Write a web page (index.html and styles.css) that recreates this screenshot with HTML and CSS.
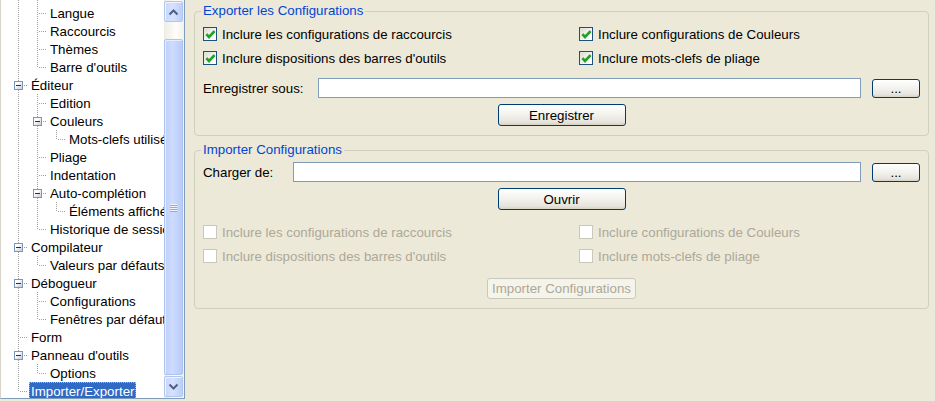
FILE: index.html
```html
<!DOCTYPE html>
<html lang="fr">
<head>
<meta charset="utf-8">
<title>Importer/Exporter</title>
<link rel="stylesheet" href="styles.css">
</head>
<body>
<div class="app">
  <div class="tree">
    <div class="tree-list">
      <div class="row partial"><span class="g v"></span><span class="g v"></span></div>
      <div class="row"><span class="g v"></span><span class="g t"></span><span class="label">Langue</span></div>
      <div class="row"><span class="g v"></span><span class="g t"></span><span class="label">Raccourcis</span></div>
      <div class="row"><span class="g v"></span><span class="g t"></span><span class="label">Thèmes</span></div>
      <div class="row"><span class="g v"></span><span class="g l"></span><span class="label">Barre d'outils</span></div>
      <div class="row"><span class="g t"><span class="exp"></span></span><span class="label">Éditeur</span></div>
      <div class="row"><span class="g v"></span><span class="g t"></span><span class="label">Edition</span></div>
      <div class="row"><span class="g v"></span><span class="g t"><span class="exp"></span></span><span class="label">Couleurs</span></div>
      <div class="row"><span class="g v"></span><span class="g v"></span><span class="g l"></span><span class="label">Mots-clefs utilisés</span></div>
      <div class="row"><span class="g v"></span><span class="g t"></span><span class="label">Pliage</span></div>
      <div class="row"><span class="g v"></span><span class="g t"></span><span class="label">Indentation</span></div>
      <div class="row"><span class="g v"></span><span class="g t"><span class="exp"></span></span><span class="label">Auto-complétion</span></div>
      <div class="row"><span class="g v"></span><span class="g v"></span><span class="g l"></span><span class="label">Éléments affichés</span></div>
      <div class="row"><span class="g v"></span><span class="g l"></span><span class="label">Historique de session</span></div>
      <div class="row"><span class="g t"><span class="exp"></span></span><span class="label">Compilateur</span></div>
      <div class="row"><span class="g v"></span><span class="g l"></span><span class="label">Valeurs par défauts</span></div>
      <div class="row"><span class="g t"><span class="exp"></span></span><span class="label">Débogueur</span></div>
      <div class="row"><span class="g v"></span><span class="g t"></span><span class="label">Configurations</span></div>
      <div class="row"><span class="g v"></span><span class="g l"></span><span class="label">Fenêtres par défaut</span></div>
      <div class="row"><span class="g t"></span><span class="label">Form</span></div>
      <div class="row"><span class="g t"><span class="exp"></span></span><span class="label">Panneau d'outils</span></div>
      <div class="row"><span class="g v"></span><span class="g l"></span><span class="label">Options</span></div>
      <div class="row"><span class="g l"></span><span class="label sel">Importer/Exporter</span></div>
    </div>
    <div class="scrollbar">
      <div class="sb-btn"><svg width="11" height="8" viewBox="0 0 11 8"><polyline points="1.5,6.5 5.5,2.5 9.5,6.5" fill="none" stroke="#4d6185" stroke-width="2"/></svg></div>
      <div class="sb-track">
        <div class="sb-thumb">
          <div class="grip"><span></span><span></span><span></span><span></span></div>
        </div>
      </div>
      <div class="sb-btn"><svg width="11" height="8" viewBox="0 0 11 8"><polyline points="1.5,1.5 5.5,5.5 9.5,1.5" fill="none" stroke="#4d6185" stroke-width="2"/></svg></div>
    </div>
  </div>

  <div class="pane">
    <fieldset class="group export">
      <legend>Exporter les Configurations</legend>
      <div class="checks">
        <label class="check"><span class="box"><svg width="11" height="11" viewBox="0 0 11 11"><polyline points="1.4,5.2 4,8 9.6,2.2" fill="none" stroke="#21a121" stroke-width="2.6"/></svg></span>Inclure les configurations de raccourcis</label>
        <label class="check"><span class="box"><svg width="11" height="11" viewBox="0 0 11 11"><polyline points="1.4,5.2 4,8 9.6,2.2" fill="none" stroke="#21a121" stroke-width="2.6"/></svg></span>Inclure configurations de Couleurs</label>
        <label class="check"><span class="box"><svg width="11" height="11" viewBox="0 0 11 11"><polyline points="1.4,5.2 4,8 9.6,2.2" fill="none" stroke="#21a121" stroke-width="2.6"/></svg></span>Inclure dispositions des barres d'outils</label>
        <label class="check"><span class="box"><svg width="11" height="11" viewBox="0 0 11 11"><polyline points="1.4,5.2 4,8 9.6,2.2" fill="none" stroke="#21a121" stroke-width="2.6"/></svg></span>Inclure mots-clefs de pliage</label>
      </div>
      <div class="file-row first">
        <span class="file-label save">Enregistrer sous:</span>
        <span class="text"></span>
        <span class="btn browse">...</span>
      </div>
      <div class="btn-row">
        <span class="btn main">Enregistrer</span>
      </div>
    </fieldset>

    <fieldset class="group import">
      <legend>Importer Configurations</legend>
      <div class="file-row">
        <span class="file-label load">Charger de:</span>
        <span class="text"></span>
        <span class="btn browse">...</span>
      </div>
      <div class="btn-row">
        <span class="btn main">Ouvrir</span>
      </div>
      <div class="checks disabled">
        <label class="check"><span class="box"></span>Inclure les configurations de raccourcis</label>
        <label class="check"><span class="box"></span>Inclure configurations de Couleurs</label>
        <label class="check"><span class="box"></span>Inclure dispositions des barres d'outils</label>
        <label class="check"><span class="box"></span>Inclure mots-clefs de pliage</label>
      </div>
      <div class="btn-row last">
        <span class="btn off">Importer Configurations</span>
      </div>
    </fieldset>
  </div>
</div>
</body>
</html>
```

FILE: styles.css
```css
html, body {
  margin: 0;
  padding: 0;
}

body {
  background: #ece9d8;
  font-family: "Liberation Sans", Arial, sans-serif;
  font-size: 13.3px;
  color: #000;
  overflow: hidden;
}

.app {
  display: flex;
  height: 401px;
}

/* ---------- tree ---------- */
.tree {
  width: 185px;
  height: 399px;
  flex: none;
  box-sizing: border-box;
  background: #fff;
  border-left: 1px solid #d8d5c8;
  border-right: 1px solid #7f9db9;
  border-bottom: 1px solid #7f9db9;
  display: flex;
}

.tree-list {
  flex: 1;
  min-width: 0;
  overflow: hidden;
  padding-left: 8px;
}

.row {
  display: flex;
  height: 18px;
  white-space: nowrap;
}

.row.partial {
  height: 4px;
}

.g {
  width: 19px;
  height: 100%;
  flex: none;
  position: relative;
}

.g::before {
  content: "";
  position: absolute;
  left: 9px;
  top: 0;
  width: 1px;
  height: 100%;
  background: linear-gradient(#a0a0a0 50%, transparent 50%) 0 0 / 1px 2px;
}

.g.l::before {
  height: 10px;
}

.g.t::after,
.g.l::after {
  content: "";
  position: absolute;
  left: 10px;
  top: 9px;
  width: 9px;
  height: 1px;
  background: linear-gradient(to right, transparent 50%, #a0a0a0 50%) 0 0 / 2px 1px;
}

.exp {
  position: absolute;
  left: 5px;
  top: 5px;
  width: 9px;
  height: 9px;
  box-sizing: border-box;
  border: 1px solid #7a96b8;
  background: linear-gradient(135deg, #ffffff 30%, #c6cbd6);
  z-index: 1;
}

.exp::after {
  content: "";
  position: absolute;
  left: 1px;
  top: 3px;
  width: 5px;
  height: 1px;
  background: #1f2f4f;
}

.label {
  height: 18px;
  box-sizing: border-box;
  padding: 2px 2px 0;
  line-height: 16px;
  margin-left: 1px;
}

.label.sel {
  background: #316ac5;
  color: #fff;
  outline: 1px dotted #e8b04a;
  outline-offset: -1px;
}

/* ---------- scrollbar ---------- */
.scrollbar {
  width: 20px;
  flex: none;
  display: flex;
  flex-direction: column;
  box-sizing: border-box;
  padding: 1px 1px 1px 0;
  background: linear-gradient(to right, #eeede5, #fdfdfa 60%, #f3f1ec);
}

.sb-btn {
  height: 21px;
  flex: none;
  box-sizing: border-box;
  border: 1px solid #b3c6ee;
  border-radius: 2px;
  background: linear-gradient(to right, #c7d6fb, #d6e2fd 45%, #bccefa);
  box-shadow: inset 1px 1px 0 #eef3ff;
  display: flex;
  align-items: center;
  justify-content: center;
}

.sb-track {
  flex: 1;
  display: flex;
  flex-direction: column;
  padding-top: 17px;
  padding-bottom: 1px;
}

.sb-thumb {
  flex: 1;
  box-sizing: border-box;
  border: 1px solid #aec3f2;
  border-radius: 2px;
  background: linear-gradient(to right, #bfd0fb, #cddcfd 45%, #b7cbf9);
  box-shadow: inset 1px 1px 0 #e4ecff;
  display: flex;
  align-items: center;
  justify-content: center;
}

.grip {
  display: flex;
  flex-direction: column;
  gap: 1px;
}

.grip span {
  width: 7px;
  height: 1px;
  background: #eef3ff;
  box-shadow: 0 1px 0 #8ca9ea;
}

/* ---------- right pane ---------- */
.pane {
  flex: 1;
  min-width: 0;
  padding: 3px 6px 0 9px;
  display: flex;
  flex-direction: column;
  gap: 6px;
}

.group {
  margin: 0;
  min-width: 0;
  border: 1px solid #d0d0bf;
  border-radius: 4px;
  padding: 0 8px 9px 8px;
}

.group legend {
  color: #0046d5;
  padding: 0 2px;
  margin-left: -2px;
  line-height: 16px;
}

.checks {
  display: grid;
  grid-template-columns: 376px 1fr;
  margin-top: 3px;
}

.check {
  display: flex;
  align-items: center;
  height: 24px;
  white-space: nowrap;
}

.box {
  width: 14px;
  height: 14px;
  flex: none;
  box-sizing: border-box;
  border: 1px solid #1c5180;
  margin-right: 5px;
  background: linear-gradient(135deg, #dcdcd5, #ffffff 85%);
  display: flex;
  align-items: center;
  justify-content: center;
}

.checks.disabled {
  margin-top: 10px;
  color: #aca899;
}

.checks.disabled .box {
  border-color: #cac8bb;
  background: #fff;
}

.file-row {
  display: flex;
  align-items: center;
  height: 20px;
  margin-top: 4px;
}

.file-row.first {
  margin-top: 8px;
}

.file-label {
  flex: none;
}

.file-label.save {
  width: 115px;
}

.file-label.load {
  width: 90px;
}

.text {
  flex: 1;
  height: 20px;
  box-sizing: border-box;
  border: 1px solid #7f9db9;
  background: #fff;
}

.btn {
  box-sizing: border-box;
  border: 1px solid #003c74;
  border-radius: 3px;
  background: linear-gradient(#ffffff, #f4f3ee 45%, #e6e4dc 85%, #d6d2c6);
  display: flex;
  align-items: center;
  justify-content: center;
  white-space: nowrap;
}

.btn.browse {
  width: 48px;
  height: 19px;
  margin-left: 11px;
  flex: none;
}

.btn-row {
  display: flex;
  justify-content: center;
  margin-top: 6px;
}

.btn.main {
  width: 128px;
  height: 22px;
}

.btn-row.last {
  margin-top: 10px;
}

.btn.off {
  width: 149px;
  height: 21px;
  border-color: #cac8bb;
  background: #f5f4ea;
  color: #aca899;
}
```
